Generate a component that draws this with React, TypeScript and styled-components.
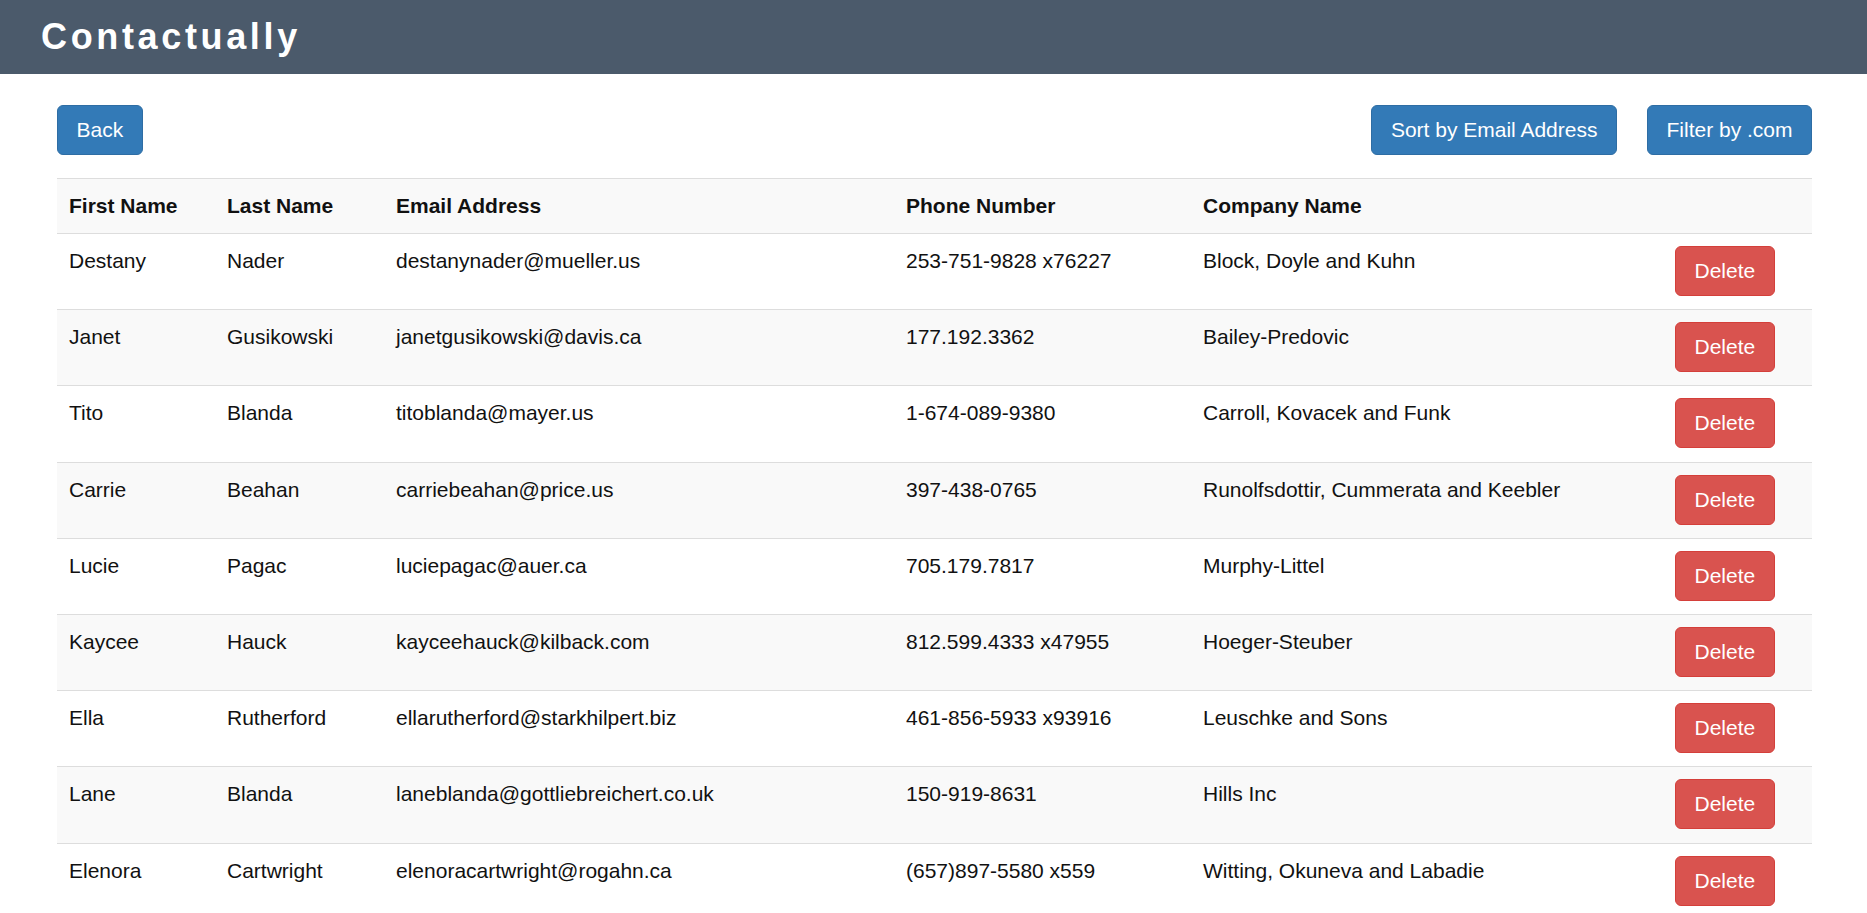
import styled, {createGlobalStyle} from "styled-components";
import * as React from "react";

const GlobalStyle = createGlobalStyle`
    * {
        box-sizing: border-box;
    }

    body {
        margin: 0;
        font-family: "Liberation Sans", Arial, Helvetica, sans-serif;
        font-size: 21px;
        line-height: 30px;
        color: #111;
        background: #fff;
    }
`;

const TopBar = styled.header`
    height: 74px;
    background: #4b5a6b;
    display: flex;
    align-items: center;
    padding-left: 41px;
`;

const Brand = styled.h1`
    margin: 0;
    font-size: 36px;
    font-weight: 700;
    letter-spacing: 3.65px;
    color: #fff;
    line-height: 1;
`;

const Page = styled.main`
    margin: 0 55px 0 57px;
`;

const Toolbar = styled.div`
    display: flex;
    align-items: center;
    padding: 31px 0 23px;
`;

const RightGroup = styled.div`
    margin-left: auto;
    display: flex;
    gap: 30px;
`;

const Button = styled.button<{ $variant?: 'primary' | 'danger' }>`
    font-family: inherit;
    font-size: 21px;
    line-height: 30px;
    padding: 9px 18.5px;
    border-radius: 6px;
    border: 1.5px solid ${({$variant}) => $variant === 'danger' ? '#d43f3a' : '#2e6da4'};
    background: ${({$variant}) => $variant === 'danger' ? '#d9534f' : '#337ab7'};
    color: #fff;
    cursor: pointer;
    white-space: nowrap;
`;

const Table = styled.table`
    width: 100%;
    border-collapse: collapse;
    table-layout: fixed;
`;

const Row = styled.tr`
    &:nth-child(odd) {
        background: #f9f9f9;
    }
`;

const Cell = styled.td<{ $head?: boolean }>`
    padding: ${({$head}) => $head ? '12px' : '12px 12px 13.2px'};
    border-top: 1.5px solid #ddd;
    vertical-align: top;
    text-align: left;
    font-weight: ${({$head}) => $head ? 700 : 400};
`;

type Contact = {
    first: string;
    last: string;
    email: string;
    phone: string;
    company: string;
};

const contacts: Contact[] = [
    {first: 'Destany', last: 'Nader', email: 'destanynader@mueller.us', phone: '253-751-9828 x76227', company: 'Block, Doyle and Kuhn'},
    {first: 'Janet', last: 'Gusikowski', email: 'janetgusikowski@davis.ca', phone: '177.192.3362', company: 'Bailey-Predovic'},
    {first: 'Tito', last: 'Blanda', email: 'titoblanda@mayer.us', phone: '1-674-089-9380', company: 'Carroll, Kovacek and Funk'},
    {first: 'Carrie', last: 'Beahan', email: 'carriebeahan@price.us', phone: '397-438-0765', company: 'Runolfsdottir, Cummerata and Keebler'},
    {first: 'Lucie', last: 'Pagac', email: 'luciepagac@auer.ca', phone: '705.179.7817', company: 'Murphy-Littel'},
    {first: 'Kaycee', last: 'Hauck', email: 'kayceehauck@kilback.com', phone: '812.599.4333 x47955', company: 'Hoeger-Steuber'},
    {first: 'Ella', last: 'Rutherford', email: 'ellarutherford@starkhilpert.biz', phone: '461-856-5933 x93916', company: 'Leuschke and Sons'},
    {first: 'Lane', last: 'Blanda', email: 'laneblanda@gottliebreichert.co.uk', phone: '150-919-8631', company: 'Hills Inc'},
    {first: 'Elenora', last: 'Cartwright', email: 'elenoracartwright@rogahn.ca', phone: '(657)897-5580 x559', company: 'Witting, Okuneva and Labadie'},
];

// column widths taken from the screenshot
const widths = [158, 169, 510, 297, 472, 149];

export default function App() {
    return (
        <>
            <GlobalStyle/>
            <TopBar>
                <Brand>Contactually</Brand>
            </TopBar>
            <Page>
                <Toolbar>
                    <Button>Back</Button>
                    <RightGroup>
                        <Button>Sort by Email Address</Button>
                        <Button>Filter by .com</Button>
                    </RightGroup>
                </Toolbar>
                <Table>
                    <colgroup>
                        {widths.map((w, i) => <col key={i} style={{width: w}}/>)}
                    </colgroup>
                    <tbody>
                    <Row>
                        <Cell $head>First Name</Cell>
                        <Cell $head>Last Name</Cell>
                        <Cell $head>Email Address</Cell>
                        <Cell $head>Phone Number</Cell>
                        <Cell $head>Company Name</Cell>
                        <Cell $head/>
                    </Row>
                    {contacts.map((c) => (
                        <Row key={c.email}>
                            <Cell>{c.first}</Cell>
                            <Cell>{c.last}</Cell>
                            <Cell>{c.email}</Cell>
                            <Cell>{c.phone}</Cell>
                            <Cell>{c.company}</Cell>
                            <Cell>
                                <Button $variant="danger">Delete</Button>
                            </Cell>
                        </Row>
                    ))}
                    </tbody>
                </Table>
            </Page>
        </>
    );
}
